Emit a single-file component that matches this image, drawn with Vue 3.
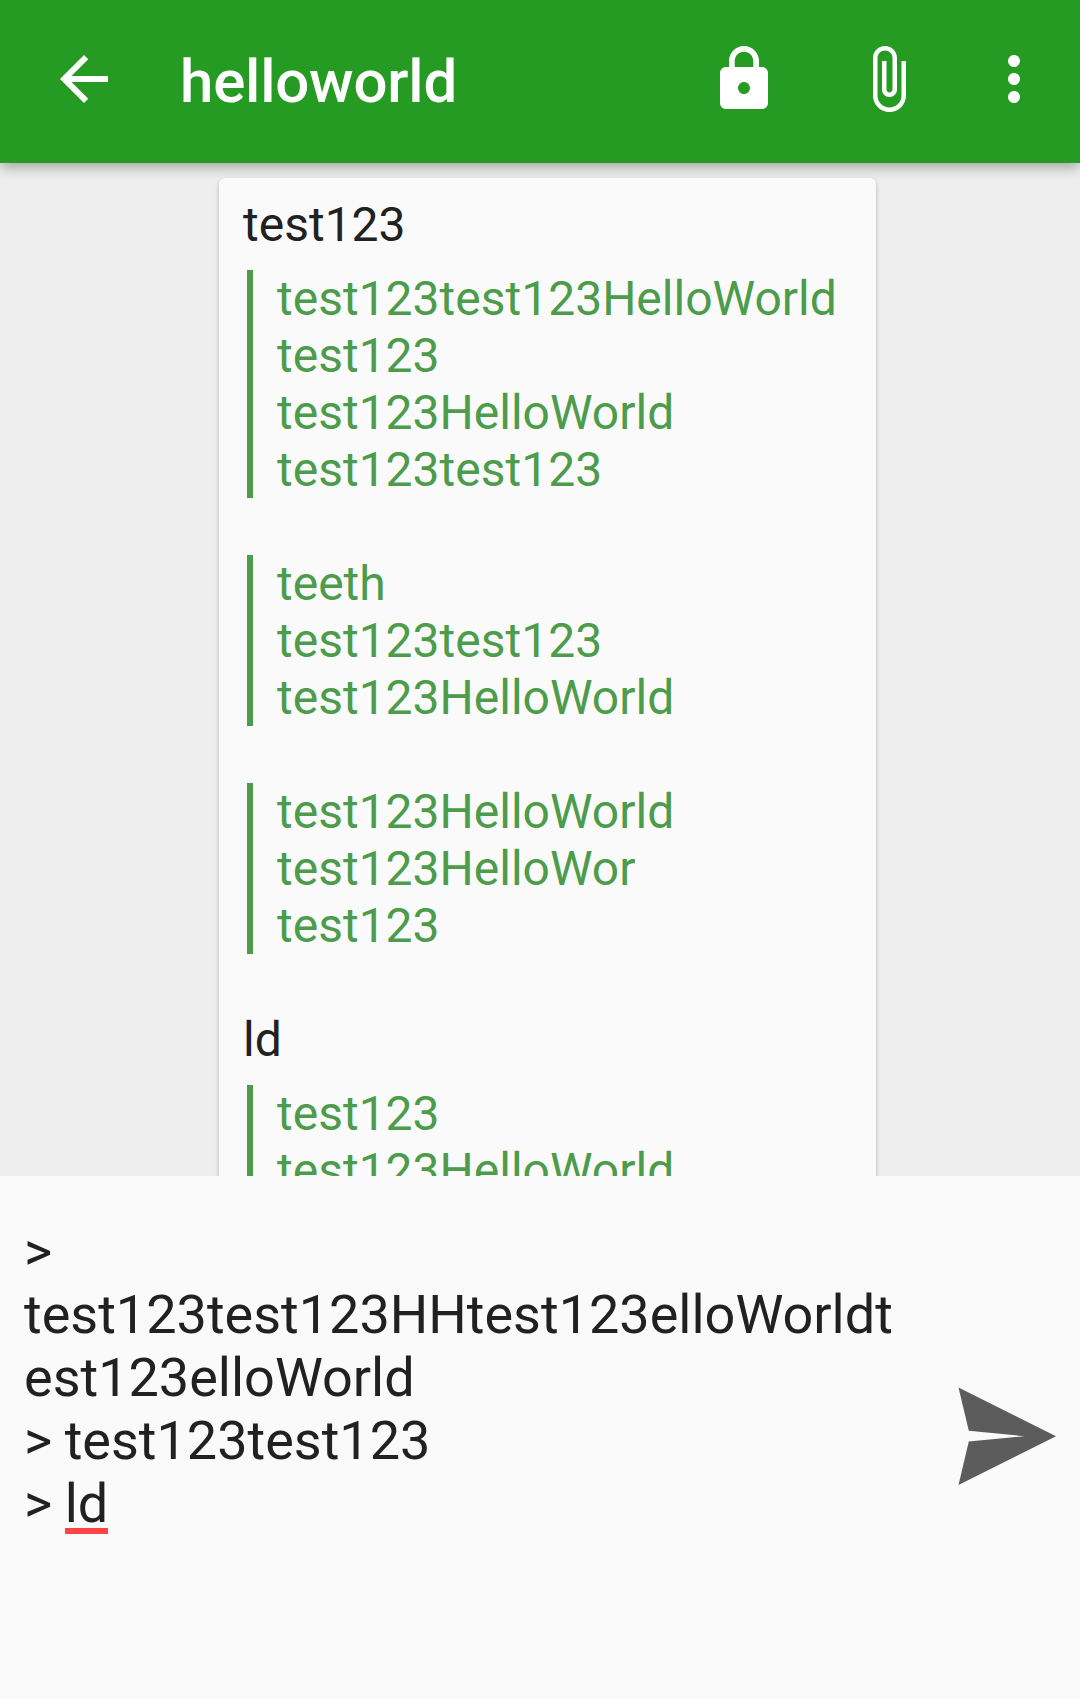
<script setup>
const blocks = [
  { type: 'text', lines: ['test123'] },
  { type: 'quote', lines: ['test123test123HelloWorld', 'test123', 'test123HelloWorld', 'test123test123'] },
  { type: 'blank', lines: [] },
  { type: 'quote', lines: ['teeth', 'test123test123', 'test123HelloWorld'] },
  { type: 'blank', lines: [] },
  { type: 'quote', lines: ['test123HelloWorld', 'test123HelloWor', 'test123'] },
  { type: 'blank', lines: [] },
  { type: 'text', lines: ['ld'] },
  { type: 'quote', lines: ['test123', 'test123HelloWorld'] },
]
</script>

<template>
  <div class="screen">
    <header class="toolbar">
      <svg class="icon" viewBox="0 0 24 24"><path d="M20 11H7.83l5.59-5.59L12 4l-8 8 8 8 1.41-1.41L7.83 13H20v-2z" /></svg>
      <h1 class="title">helloworld</h1>
      <svg class="icon lock" viewBox="0 0 24 24"><path d="M18 8h-1V6c0-2.76-2.24-5-5-5S7 3.24 7 6v2H6c-1.1 0-2 .9-2 2v10c0 1.1.9 2 2 2h12c1.1 0 2-.9 2-2V10c0-1.1-.9-2-2-2zm-6 9c-1.1 0-2-.9-2-2s.9-2 2-2 2 .9 2 2-.9 2-2 2zm3.1-9H8.9V6c0-1.71 1.39-3.1 3.1-3.1 1.71 0 3.1 1.39 3.1 3.1v2z" /></svg>
      <svg class="icon attach" viewBox="0 0 24 24"><path d="M16.5 6v11.5c0 2.21-1.79 4-4 4s-4-1.79-4-4V5c0-1.38 1.12-2.5 2.5-2.5s2.5 1.12 2.5 2.5v10.5c0 .55-.45 1-1 1s-1-.45-1-1V6H10v9.5c0 1.38 1.12 2.5 2.5 2.5s2.5-1.12 2.5-2.5V5c0-2.21-1.79-4-4-4S7 2.79 7 5v12.5c0 3.04 2.46 5.5 5.5 5.5s5.5-2.46 5.5-5.5V6h-1.5z" /></svg>
      <svg class="icon" viewBox="0 0 24 24"><path d="M12 8c1.1 0 2-.9 2-2s-.9-2-2-2-2 .9-2 2 .9 2 2 2zm0 2c-1.1 0-2 .9-2 2s.9 2 2 2 2-.9 2-2-.9-2-2-2zm0 6c-1.1 0-2 .9-2 2s.9 2 2 2 2-.9 2-2-.9-2-2-2z" /></svg>
    </header>

    <main class="messages">
      <article class="bubble">
        <div v-for="(block, i) in blocks" :key="i" :class="block.type">
          <p v-for="(line, j) in block.lines" :key="j">{{ line }}</p>
        </div>
      </article>
    </main>

    <footer class="composer">
      <div class="input">
        <p>&gt;</p>
        <p>test123test123HHtest123elloWorldt</p>
        <p>est123elloWorld</p>
        <p>&gt; test123test123</p>
        <p>&gt; <span class="misspelled">ld</span></p>
      </div>
      <svg class="send" viewBox="0 0 98 98"><path d="M.5 .4L98 49.2 .5 98 10.8 54.6 66.5 49.2 10.8 43.8z" /></svg>
    </footer>
  </div>
</template>

<style>
body {
  margin: 0;
}
</style>

<style scoped>
.screen {
  display: flex;
  flex-direction: column;
  width: 1080px;
  height: 1699px;
  overflow: hidden;
  background: #eee;
  font-family: Roboto, sans-serif;
  color: #212121;
}
p,
h1 {
  margin: 0;
}
.toolbar {
  display: flex;
  flex: none;
  box-sizing: border-box;
  height: 163px;
  padding: 43px 30px 0 48px;
  background: #259b24;
  box-shadow: 0 5px 12px rgba(0, 0, 0, 0.29);
}
.icon {
  flex: none;
  width: 72px;
  height: 72px;
  fill: #fff;
}
.title {
  flex: 1;
  margin-left: 60px;
  padding-top: 4px;
  color: #fff;
  font-size: 60px;
  font-weight: 500;
  letter-spacing: -0.2px;
  line-height: 70px;
}
.lock {
  margin-right: 72px;
}
.attach {
  margin-right: 54px;
}
.messages {
  flex: none;
  height: 998px;
  padding-top: 15px;
  overflow: hidden;
}
.messages,
.composer {
  z-index: 0;
}
.bubble {
  box-sizing: border-box;
  width: 657px;
  height: 1100px;
  margin-left: 219px;
  padding: 18px 24px;
  border-radius: 6px;
  background: #fafafa;
  box-shadow: 0 2px 4px rgba(0, 0, 0, 0.25);
  font-size: 48px;
  line-height: 57px;
  white-space: nowrap;
}
.text {
  margin-bottom: 17px;
}
.quote {
  margin-left: 4px;
  padding-left: 24px;
  border-left: 6px solid #4c9c4b;
  color: #4c9c4b;
}
.blank {
  height: 57px;
}
.composer {
  display: flex;
  flex: 1;
  background: #fafafa;
}
.input {
  flex: 1;
  padding: 44px 0 0 24px;
  font-size: 54px;
  line-height: 63px;
  word-spacing: -1px;
  white-space: nowrap;
}
.misspelled {
  display: inline-block;
  height: 63px;
  background: linear-gradient(#ff4444, #ff4444) 0 56px / 100% 6px no-repeat;
  vertical-align: top;
}
.send {
  flex: none;
  width: 98px;
  height: 98px;
  margin: 211px 24px 0 0;
  fill: #5c5c5c;
}
</style>
